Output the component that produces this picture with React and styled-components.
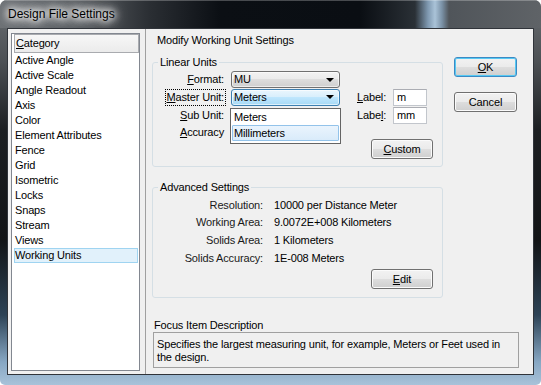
import React from 'react';
import styled, { createGlobalStyle } from 'styled-components';

const Global = createGlobalStyle`
  html, body { margin: 0; padding: 0; background: #ffffff; }
  body { font-family: "Liberation Sans", Arial, sans-serif; font-size: 11px; color: #000; }
  * { box-sizing: border-box; }
`;

const Window = styled.div`
  width: 541px;
  height: 385px;
  display: flex;
  flex-direction: column;
  border-radius: 7px 7px 5px 5px;
  overflow: hidden;
  background: linear-gradient(180deg, #6a6e72 0px, #4d5155 60px, #1c1f22 130px, #121416 240px, #2d4356 315px, #87a7c3 362px, #a8c2d9 385px);
`;

const TitleBar = styled.div`
  height: 28px;
  flex: none;
  display: flex;
  align-items: center;
  padding-left: 8px;
  background: linear-gradient(90deg, #6c7074 0px, #5a5e62 80px, #2a2e33 150px, #0b0f14 220px, #0a0e13 360px, #2a3036 415px, #7f99b1 428px, #aac3d8 435px, #7a91a6 442px, #50555a 449px, #5f6367 541px);
  box-shadow: inset 0 1px 0 rgba(255, 255, 255, 0.25);
`;

const TitleText = styled.span`
  font-family: "Liberation Sans", Arial, sans-serif;
  font-size: 12px;
  color: #000;
  text-shadow: 0 0 6px #fff, 0 0 8px #fff, 0 0 10px #fff, 0 0 14px rgba(255, 255, 255, 0.9), 0 0 18px rgba(255, 255, 255, 0.7);
`;

const FrameBody = styled.div`
  flex: 1;
  display: flex;
  padding: 0 8px 10px 7px;
  min-height: 0;
`;

const Client = styled.div`
  flex: 1;
  display: flex;
  background: #f0f0f0;
  border: 1px solid #30343a;
  letter-spacing: -0.15px;
`;

const LeftPane = styled.div`
  width: 137px;
  flex: none;
  display: flex;
  padding: 4px 6px 3px 3px;
`;

const ListBox = styled.div`
  flex: 1;
  background: #ffffff;
  border: 1px solid #828790;
  padding-left: 1px;
`;

const ListHeader = styled.div`
  height: 19px;
  width: 125px;
  margin-left: 1px;
  border: 1px solid #a9abaf;
  background: linear-gradient(180deg, #f7f7f7 0%, #ebebeb 100%);
  line-height: 17px;
  padding-left: 1px;
`;

const ListItem = styled.div`
  height: 15px;
  width: 124px;
  margin-left: 1px;
  line-height: 13px;
  border: 1px solid ${(p) => (p.$selected ? '#9fd4f1' : 'transparent')};
  background: ${(p) => (p.$selected ? '#e1f1fb' : 'transparent')};
  white-space: nowrap;
`;

const RightPane = styled.div`
  flex: 1;
  border-left: 1px solid #a0a0a0;
  padding: 4px 14px 0 6px;
  display: flex;
  flex-direction: column;
`;

const Heading = styled.div`
  height: 14px;
  line-height: 14px;
  padding-left: 5px;
  margin-bottom: 9px;
`;

const TopRow = styled.div`
  display: flex;
  align-items: flex-start;
`;

const GroupsCol = styled.div`
  width: 291px;
  display: flex;
  flex-direction: column;
`;

const ButtonsCol = styled.div`
  margin-left: 11px;
  margin-top: 1px;
  width: 63px;
  display: flex;
  flex-direction: column;
  gap: 15px;
`;

const Group = styled.fieldset`
  margin: ${(p) => (p.$top ? `${p.$top}px` : '0')} 0 0 0;
  padding: 2px 0 ${(p) => p.$bottom || 7}px 0;
  border: 1px solid #d5dfe5;
  border-radius: 3px;
  min-width: 0;
`;

const Legend = styled.legend`
  margin-left: 5px;
  padding: 0 2px;
  line-height: 13px;
  height: 13px;
`;

const UnitsGrid = styled.div`
  display: grid;
  grid-template-columns: 73px 109px 43px 34px;
  grid-template-rows: 17px 18px 18px 17px;
  column-gap: 5px;
  align-items: center;
`;

const FieldLabel = styled.div`
  justify-self: end;
  line-height: 15px;
  padding: 0 1px;
  border: 1px dotted ${(p) => (p.$focus ? '#000' : 'transparent')};
  white-space: nowrap;
`;

const SideLabel = styled.div`
  padding-left: 12px;
  line-height: 15px;
  white-space: nowrap;
`;

const U = styled.span`
  text-decoration: underline;
  text-underline-offset: 1px;
`;

const ComboWrap = styled.div`
  position: relative;
  height: 17px;
`;

const Combo = styled.div`
  height: 17px;
  width: 109px;
  display: flex;
  align-items: center;
  justify-content: space-between;
  padding: 0 5px 0 2px;
  border: 1px solid ${(p) => (p.$active ? '#3c7fb1' : '#707070')};
  border-radius: 3px;
  background: ${(p) =>
    p.$active
      ? 'linear-gradient(180deg, #eaf6fd 0%, #d9effc 45%, #bee6fd 50%, #a7d9f5 100%)'
      : 'linear-gradient(180deg, #f2f2f2 0%, #ebebeb 45%, #dddddd 50%, #cfcfcf 100%)'};
  box-shadow: inset 0 0 0 1px rgba(255, 255, 255, 0.6);
  line-height: 13px;
`;

const Arrow = styled.span`
  width: 0;
  height: 0;
  border-left: 4px solid transparent;
  border-right: 4px solid transparent;
  border-top: 4px solid #000;
`;

const DropList = styled.div`
  position: absolute;
  top: 19px;
  left: -1px;
  width: 111px;
  height: 36px;
  background: #ffffff;
  border: 1px solid #646464;
  padding: 0 1px;
  z-index: 2;
`;

const DropItem = styled.div`
  height: 16px;
  line-height: 14px;
  padding-left: 1px;
  border: 1px solid ${(p) => (p.$hover ? '#93c3ea' : 'transparent')};
  background: ${(p) => (p.$hover ? 'linear-gradient(180deg, #eaf4fd 0%, #d9ebfa 100%)' : 'transparent')};
  border-radius: 1px;
`;

const TextBox = styled.div`
  height: 17px;
  width: 34px;
  background: #ffffff;
  border: 1px solid #c2c6cc;
  border-top-color: #abadb3;
  padding-left: 3px;
  line-height: 15px;
`;

const ButtonRow = styled.div`
  display: flex;
  justify-content: flex-end;
  padding-right: 9px;
  margin-top: ${(p) => p.$mt || 0}px;
`;

const Button = styled.div`
  width: ${(p) => p.$w || 62}px;
  height: 20px;
  display: flex;
  align-items: center;
  justify-content: center;
  border: 1px solid ${(p) => (p.$default ? '#3c8ac4' : '#707070')};
  border-radius: 3px;
  background: linear-gradient(180deg, #f2f2f2 0%, #ebebeb 48%, #dddddd 52%, #cfcfcf 100%);
  box-shadow: inset 0 0 0 1px ${(p) => (p.$default ? '#56c9f3' : '#fbfbfb')};
  line-height: 13px;
`;

const InfoGrid = styled.div`
  display: grid;
  grid-template-columns: 110px 1fr;
  grid-template-rows: 18px 17px 18px 18px;
  column-gap: 11px;
  align-items: center;
`;

const InfoLabel = styled.div`
  text-align: right;
  white-space: nowrap;
  line-height: 13px;
  color: #1a1a1a;
`;

const InfoValue = styled.div`
  white-space: nowrap;
  line-height: 13px;
`;

const FocusLabel = styled.div`
  margin-top: 21px;
  padding-left: 2px;
  line-height: 13px;
  height: 13px;
`;

const FocusBox = styled.div`
  margin-left: 1px;
  width: 366px;
  height: 36px;
  border: 1px solid #a0a0a0;
  padding: 5px 0 0 3px;
  line-height: 13px;
  white-space: nowrap;
`;

const categories = [
  'Active Angle',
  'Active Scale',
  'Angle Readout',
  'Axis',
  'Color',
  'Element Attributes',
  'Fence',
  'Grid',
  'Isometric',
  'Locks',
  'Snaps',
  'Stream',
  'Views',
  'Working Units',
];

const advanced = [
  ['Resolution:', '10000 per Distance Meter'],
  ['Working Area:', '9.0072E+008 Kilometers'],
  ['Solids Area:', '1 Kilometers'],
  ['Solids Accuracy:', '1E-008 Meters'],
];

export default function App() {
  return (
    <>
      <Global />
      <Window>
        <TitleBar>
          <TitleText>Design File Settings</TitleText>
        </TitleBar>
        <FrameBody>
          <Client>
            <LeftPane>
              <ListBox>
                <ListHeader>
                  <U>C</U>ategory
                </ListHeader>
                {categories.map((c) => (
                  <ListItem key={c} $selected={c === 'Working Units'}>
                    {c}
                  </ListItem>
                ))}
              </ListBox>
            </LeftPane>
            <RightPane>
              <Heading>Modify Working Unit Settings</Heading>
              <TopRow>
                <GroupsCol>
                  <Group>
                    <Legend>Linear Units</Legend>
                    <UnitsGrid>
                      <FieldLabel>
                        <U>F</U>ormat:
                      </FieldLabel>
                      <ComboWrap>
                        <Combo>
                          <span>MU</span>
                          <Arrow />
                        </Combo>
                      </ComboWrap>
                      <div />
                      <div />

                      <FieldLabel $focus>
                        <U>M</U>aster Unit:
                      </FieldLabel>
                      <ComboWrap>
                        <Combo $active>
                          <span>Meters</span>
                          <Arrow />
                        </Combo>
                        <DropList>
                          <DropItem>Meters</DropItem>
                          <DropItem $hover>Millimeters</DropItem>
                        </DropList>
                      </ComboWrap>
                      <SideLabel>
                        <U>L</U>abel:
                      </SideLabel>
                      <TextBox>m</TextBox>

                      <FieldLabel>
                        <U>S</U>ub Unit:
                      </FieldLabel>
                      <div />
                      <SideLabel>
                        Labe<U>l</U>:
                      </SideLabel>
                      <TextBox>mm</TextBox>

                      <FieldLabel>
                        <U>A</U>ccuracy
                      </FieldLabel>
                      <div />
                      <div />
                      <div />
                    </UnitsGrid>
                    <ButtonRow $mt={-2}>
                      <Button>
                        <span>
                          <U>C</U>ustom
                        </span>
                      </Button>
                    </ButtonRow>
                  </Group>
                  <Group $top={14} $bottom={8}>
                    <Legend>Advanced Settings</Legend>
                    <InfoGrid>
                      {advanced.map(([k, v]) => (
                        <React.Fragment key={k}>
                          <InfoLabel>{k}</InfoLabel>
                          <InfoValue>{v}</InfoValue>
                        </React.Fragment>
                      ))}
                    </InfoGrid>
                    <ButtonRow $mt={2}>
                      <Button>
                        <span>
                          <U>E</U>dit
                        </span>
                      </Button>
                    </ButtonRow>
                  </Group>
                </GroupsCol>
                <ButtonsCol>
                  <Button $w={63} $default>
                    <span>
                      <U>O</U>K
                    </span>
                  </Button>
                  <Button $w={63}>Cancel</Button>
                </ButtonsCol>
              </TopRow>
              <FocusLabel>Focus Item Description</FocusLabel>
              <FocusBox>
                Specifies the largest measuring unit, for example, Meters or Feet used in
                <br />
                the design.
              </FocusBox>
            </RightPane>
          </Client>
        </FrameBody>
      </Window>
    </>
  );
}
